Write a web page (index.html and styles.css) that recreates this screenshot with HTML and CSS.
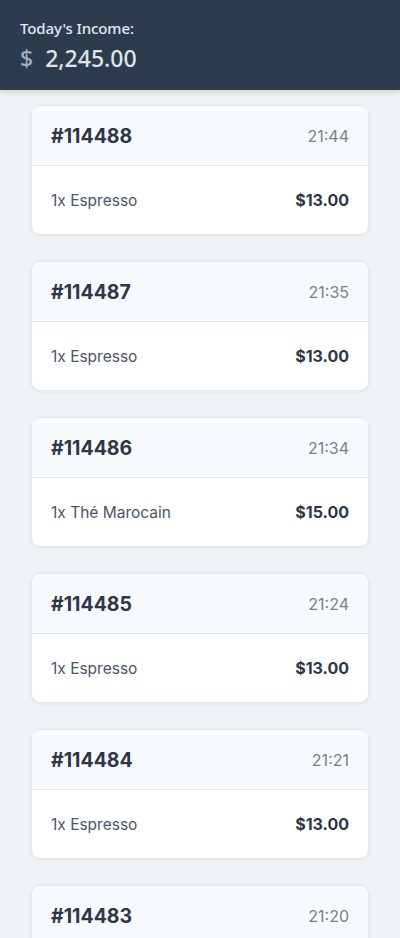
FILE: index.html
```html
<!DOCTYPE html>
<html>
<head>
<meta charset="utf-8">
<link rel="stylesheet" href="styles.css">
</head>
<body>
<header class="topbar">
  <div class="income-label">Today's Income:</div>
  <div class="income-value"><span class="cur">$</span>2,245.00</div>
</header>
<main class="orders">
  <div class="card">
    <div class="card-head"><span class="order-id">#114488</span><span class="time">21:44</span></div>
    <div class="card-body"><span class="item">1x Espresso</span><span class="price">$13.00</span></div>
  </div>
  <div class="card">
    <div class="card-head"><span class="order-id">#114487</span><span class="time">21:35</span></div>
    <div class="card-body"><span class="item">1x Espresso</span><span class="price">$13.00</span></div>
  </div>
  <div class="card">
    <div class="card-head"><span class="order-id">#114486</span><span class="time">21:34</span></div>
    <div class="card-body"><span class="item">1x Thé Marocain</span><span class="price">$15.00</span></div>
  </div>
  <div class="card">
    <div class="card-head"><span class="order-id">#114485</span><span class="time">21:24</span></div>
    <div class="card-body"><span class="item">1x Espresso</span><span class="price">$13.00</span></div>
  </div>
  <div class="card">
    <div class="card-head"><span class="order-id">#114484</span><span class="time">21:21</span></div>
    <div class="card-body"><span class="item">1x Espresso</span><span class="price">$13.00</span></div>
  </div>
  <div class="card">
    <div class="card-head"><span class="order-id">#114483</span><span class="time">21:20</span></div>
    <div class="card-body"><span class="item">1x Espresso</span><span class="price">$13.00</span></div>
  </div>
</main>
</body>
</html>
```
FILE: styles.css
```css
html, body {
  margin: 0;
  padding: 0;
}
body {
  background: #f0f3f6;
  font-family: Inter, "Noto Sans", sans-serif;
  overflow: hidden;
  height: 938px;
}
.topbar {
  background: #2d3b4e;
  height: 90px;
  box-sizing: border-box;
  padding: 17px 20px 0;
  box-shadow: 0 2px 6px rgba(0,0,0,0.15);
  font-family: "Noto Sans", sans-serif;
}
.income-label {
  color: #e2e8f0;
  font-size: 15px;
  line-height: 22px;
  font-weight: 500;
  letter-spacing: -0.1px;
}
.income-value {
  color: #dfe4ea;
  font-size: 23px;
  line-height: 30px;
  margin-top: 4px;
  font-weight: 500;
}
.cur {
  color: #a0aec0;
  margin-right: 12px;
}
.orders {
  padding: 15px 31px 0;
  display: flex;
  flex-direction: column;
  gap: 26px;
}
.card {
  background: #fff;
  border: 1px solid #e2e8f0;
  border-radius: 9px;
  overflow: hidden;
  box-shadow: 0 1px 4px rgba(0,0,0,0.06);
}
.card-head {
  background: #f7fafc;
  height: 59px;
  border-bottom: 1px solid #e2e8f0;
  display: flex;
  align-items: center;
  justify-content: space-between;
  padding: 0 19px;
}
.order-id {
  font-size: 19.5px;
  font-weight: 700;
  color: #2d3748;
}
.time {
  font-size: 16px;
  color: #7b8088;
}
.card-body {
  height: 68px;
  display: flex;
  align-items: center;
  justify-content: space-between;
  padding: 0 19px;
}
.item {
  font-size: 15.5px;
  color: #4a5568;
}
.price {
  font-size: 16px;
  font-weight: 700;
  color: #2d3748;
}
```
